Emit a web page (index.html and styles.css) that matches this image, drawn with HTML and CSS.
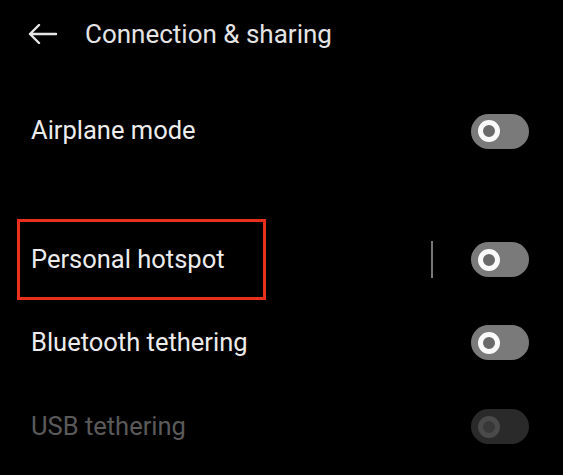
FILE: index.html
```html
<!DOCTYPE html>
<html>
<head>
<meta charset="utf-8">
<link rel="stylesheet" href="styles.css">
</head>
<body>
<div class="screen">
  <header class="topbar">
    <svg class="back" width="30" height="20" viewBox="0 0 30 20">
      <path d="M2 10 H28 M11 1 L2 10 L11 19" fill="none" stroke="#e6e6e6" stroke-width="2.4" stroke-linecap="round" stroke-linejoin="round"/>
    </svg>
    <h1 class="title">Connection &amp; sharing</h1>
  </header>
  <div class="row row-airplane">
    <span class="label">Airplane mode</span>
    <span class="toggle"><span class="knob"></span></span>
  </div>
  <div class="row row-hotspot">
    <span class="label">Personal hotspot</span>
    <span class="right"><span class="divider"></span><span class="toggle"><span class="knob"></span></span></span>
  </div>
  <div class="row row-bt">
    <span class="label">Bluetooth tethering</span>
    <span class="toggle"><span class="knob"></span></span>
  </div>
  <div class="row row-usb disabled">
    <span class="label">USB tethering</span>
    <span class="toggle"><span class="knob"></span></span>
  </div>
</div>
</body>
</html>
```
FILE: styles.css
```css
html, body {
  margin: 0;
  padding: 0;
  background: #000;
}
.screen {
  width: 563px;
  height: 475px;
  background: #000;
  font-family: Roboto, "Noto Sans", sans-serif;
  color: #ececec;
  overflow: hidden;
}
.topbar {
  display: flex;
  align-items: center;
  height: 68px;
  padding-left: 28px;
}
.back {
  display: block;
  margin-right: 27px;
}
.title {
  margin: 0;
  font-size: 26px;
  font-weight: 400;
  color: #e4e4e4;
  line-height: 1;
}
.row {
  display: flex;
  align-items: center;
  justify-content: space-between;
  padding: 0 34px 0 31px;
}
.row-airplane { height: 34px; margin-top: 46px; }
.row-hotspot {
  height: 81px;
  margin-top: 71px;
  position: relative;
}
.row-hotspot::before {
  content: "";
  position: absolute;
  left: 17px;
  top: 0;
  width: 243px;
  height: 75px;
  border: 3px solid #e8301c;
}
.row-bt { height: 35px; margin-top: 25px; }
.row-usb { height: 35px; margin-top: 49px; }
.label {
  font-size: 25.5px;
  line-height: 1;
}
.right {
  display: flex;
  align-items: center;
  gap: 38px;
}
.divider {
  width: 2px;
  height: 37px;
  background: #777;
}
.toggle {
  width: 58px;
  height: 35px;
  border-radius: 18px;
  background: #7a7a7a;
  display: flex;
  align-items: center;
  padding-left: 7px;
  box-sizing: border-box;
}
.knob {
  width: 22px;
  height: 22px;
  border-radius: 50%;
  border: 5px solid #fafafa;
  box-sizing: border-box;
  background: #6a6a6a;
}
.disabled .label { color: #5a5a5a; }
.disabled .toggle { background: #2a2a2a; }
.disabled .knob { border-color: #4a4a4a; background: #383838; }
```
